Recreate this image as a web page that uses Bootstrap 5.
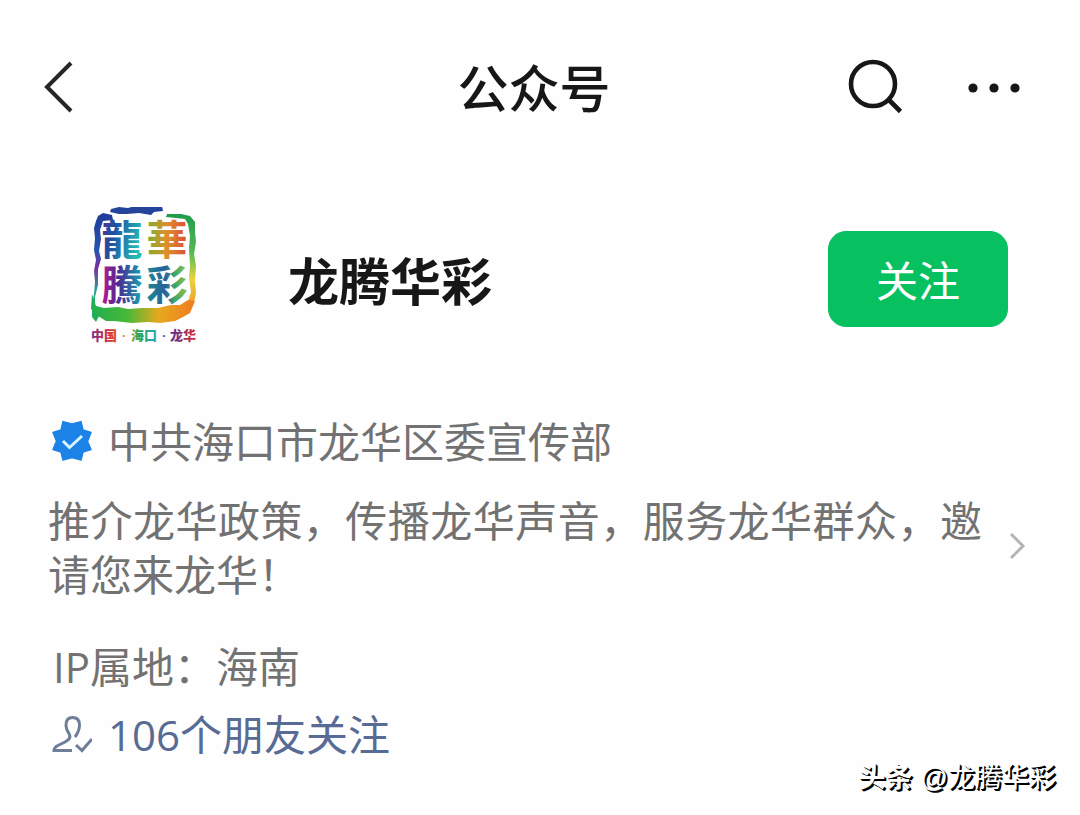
<!DOCTYPE html>
<html lang="zh-CN">
<head>
<meta charset="utf-8">
<meta name="viewport" content="width=device-width, initial-scale=1">
<title>公众号</title>
<link href="https://cdn.jsdelivr.net/npm/bootstrap@5.3.0/dist/css/bootstrap.min.css" rel="stylesheet">
<style>
  body { font-family: "Noto Sans CJK SC", sans-serif; background: #fefefe; color: #171717; font-size: 42px; line-height: 54px; }
  svg { display: block; flex: none; }
  .topbar { padding: 50px 54px 0 42px; }
  .topbar .side { flex: 1 1 0; }
  .topbar h1 { font-size: 51px; line-height: 72px; font-weight: 500; }
  .icon-btn { border: 0; padding: 0; background: none; color: #171717; }
  .profile { padding: 85px 72px 0 88px; }
  .profile h2 { font-size: 51px; line-height: 72px; font-weight: 700; margin-left: 88px; }
  .follow { --bs-btn-bg: #07c160; --bs-btn-border-color: #07c160; --bs-btn-color: #fff; --bs-btn-hover-bg: #06ad56; --bs-btn-hover-color: #fff; width: 180px; height: 96px; border-radius: 18px; font-size: 42px; line-height: 54px; padding: 0; }
  .details { padding: 62px 48px 0; color: #727272; }
  .intro { color: inherit; margin-top: 25px; }
  .intro span { text-align: justify; margin-right: 18px; }
  .friends { color: #576b95; margin-top: 14px; }
  .region { padding-left: 5px; margin-top: 40px; }
  .region, .friends { font-family: "Open Sans", "Noto Sans CJK SC", sans-serif; }
  .watermark { font-family: "Liberation Sans", "Noto Sans CJK SC", sans-serif; font-size: 27px; line-height: 32px; color: #fff; text-shadow: 1px 1px 0 #000, 2px 2px 0 #000; padding-right: 24px; gap: 8px; }
</style>
</head>
<body>
<header class="topbar d-flex align-items-center">
  <div class="side">
    <button class="icon-btn d-block" type="button" aria-label="返回">
      <svg width="40" height="56" viewBox="0 0 40 56" fill="none" stroke="#262626" stroke-width="4"><path d="M29 5 5 29 29 53"/></svg>
    </button>
  </div>
  <h1 class="m-0">公众号</h1>
  <div class="side d-flex justify-content-end align-items-center">
    <button class="icon-btn" type="button" aria-label="搜索">
      <svg width="60" height="60" viewBox="0 0 60 60" fill="none" stroke="#171717" stroke-width="4.600"><circle cx="27" cy="28" r="22"/><path d="m42.500 43.500 12 12"/></svg>
    </button>
    <button class="icon-btn ms-5" type="button" aria-label="更多">
      <svg width="72" height="60" viewBox="0 0 72 60" fill="#171717"><circle cx="19" cy="32" r="4.600"/><circle cx="40" cy="32" r="4.600"/><circle cx="61" cy="32" r="4.600"/></svg>
    </button>
  </div>
</header>
<main>
  <section class="profile d-flex align-items-center">
    <svg width="112" height="144" viewBox="0 3 112 144" role="img" aria-label="中国·海口·龙华" font-family="Noto Sans CJK SC, sans-serif">
      <defs>
        <linearGradient id="frameLeft" x1="0" y1="0" x2="0" y2="1"><stop offset="0" stop-color="#203a9a"/><stop offset=".35" stop-color="#2755b0"/><stop offset=".5" stop-color="#7b2f9c"/><stop offset=".7" stop-color="#2d9c9c"/><stop offset="1" stop-color="#22b24c"/></linearGradient>
        <linearGradient id="frameRight" x1="0" y1="0" x2="0" y2="1"><stop offset="0" stop-color="#1f9c4b"/><stop offset=".4" stop-color="#58ba58"/><stop offset=".65" stop-color="#ead33c"/><stop offset="1" stop-color="#f08a20"/></linearGradient>
        <linearGradient id="frameBase"><stop offset="0" stop-color="#1fae50"/><stop offset=".35" stop-color="#48b838"/><stop offset=".65" stop-color="#e7a91e"/><stop offset="1" stop-color="#ef7b22"/></linearGradient>
        <linearGradient id="inkA" x2="1" y2=".4"><stop offset="0" stop-color="#5a2a94"/><stop offset=".4" stop-color="#1e50a5"/><stop offset="1" stop-color="#27b9b4"/></linearGradient>
        <linearGradient id="inkB"><stop offset="0" stop-color="#7dae2e"/><stop offset=".5" stop-color="#df8f2c"/><stop offset="1" stop-color="#dc4c35"/></linearGradient>
        <linearGradient id="inkC"><stop offset="0" stop-color="#c0178f"/><stop offset=".4" stop-color="#4a2a94"/><stop offset="1" stop-color="#1aa3b0"/></linearGradient>
        <linearGradient id="inkD"><stop offset="0" stop-color="#178c94"/><stop offset=".45" stop-color="#2b5e9c"/><stop offset=".7" stop-color="#3fa86a"/><stop offset="1" stop-color="#9ac03c"/></linearGradient>
        <linearGradient id="caption" gradientUnits="userSpaceOnUse" x1="3" x2="109" y1="0" y2="0"><stop offset="0" stop-color="#7a2a90"/><stop offset=".18" stop-color="#d93030"/><stop offset=".32" stop-color="#e88a28"/><stop offset=".45" stop-color="#25a45a"/><stop offset=".6" stop-color="#2aa8b0"/><stop offset=".75" stop-color="#55308f"/><stop offset="1" stop-color="#e02f2f"/></linearGradient>
      </defs>
      <path fill="#24439b" d="m23 5 8-2 9 1 7-2 27 0 1 5-9 1-3 3-12-2-12 1-8 0-9-2z"/>
      <path fill="url(#frameLeft)" d="m10 12 5-3 9 2 1 5-10 1-3 9 1 9-2 12 2 8-3 10 0 16-3 12 0 11 5 6-4 8-4-5 0-11 2-12 1-12-1-11 2-11-2-10 1-12-1-10 2-7z"/>
      <path fill="url(#frameRight)" d="m79 10 14 0 9 2 5 6 0 10 1 10-2 12 2 12-1 15 1 12-2 10-8 11-5-4 7-8 3-10-2-14 1-13-1-17 1-12-2-12-3-5-19-2z"/>
      <path fill="url(#frameBase)" d="m4 90 4 12 8 2 14-1 10 2 14-1 16 0 13-3 9 0 8-5 7 1-5 12-7 4-8 4-15 2-12-1-16 1-18-2-8 0-8-5-7-7z"/>
      <g font-size="41" text-anchor="middle" font-weight="700">
        <text x="34" y="51" fill="url(#inkA)">龍</text><text x="79" y="51" fill="url(#inkB)">華</text>
        <text x="34" y="96" fill="url(#inkC)">騰</text><text x="79" y="96" fill="url(#inkD)">彩</text>
      </g>
      <g font-size="13" font-weight="900" fill="url(#caption)">
        <text x="3" y="136">中国</text><text x="43" y="136">海口</text><text x="82" y="136">龙华</text>
        <g font-family="Liberation Sans, sans-serif"><text x="34" y="136">·</text><text x="74" y="136">·</text></g>
      </g>
    </svg>
    <h2 class="mb-0">龙腾华彩</h2>
    <button class="btn follow ms-auto" type="button">关注</button>
  </section>
  <section class="details">
    <div class="d-flex align-items-center">
      <svg class="me-3" width="44" height="44" viewBox="0 0 44 44"><path fill="#1b82e6" stroke="#1b82e6" stroke-width="1.500" stroke-linejoin="round" d="M24 6 33 3.600 35 12 43 14.500 39.500 23.500 43 31.500 35 34 33 42 24 39.500 15 42 13 34 5 31.500 8.500 23 5 14.500 13 12 15 3.600z"/><path fill="none" stroke="#d8f4ff" stroke-width="3" d="m15 23 6.500 6.500L34 18"/></svg>
      <span>中共海口市龙华区委宣传部</span>
    </div>
    <a class="intro d-flex align-items-center text-decoration-none" href="#intro">
      <span class="flex-fill">推介龙华政策，传播龙华声音，服务龙华群众，邀请您来龙华！</span>
      <svg width="32" height="32" viewBox="0 0 32 32" fill="none" stroke="#b4b4b4" stroke-width="3"><path d="m11 4 12 12-12 12"/></svg>
    </a>
    <p class="region mb-0">IP属地：海南</p>
    <a class="friends d-flex align-items-center text-decoration-none" href="#friends">
      <svg class="me-3" width="44" height="44" viewBox="-2 0 44 44" fill="none" stroke="#6e7d99" stroke-width="3"><path d="M25 24C28 20 29.500 16 29.500 12C29.500 7 27 4.500 22.500 4.500S16 7 16 12C16 16 18 19 19.500 21.500C21 25 19 27 15 29L7 33Q4 35 4 37.500H22"/><path d="m26 32 6 5.500L42 26"/></svg>
      <span>106个朋友关注</span>
    </a>
  </section>
</main>
<footer class="watermark d-flex justify-content-end"><span class="fw-semibold">头条</span><span>@龙腾华彩</span></footer>
<script src="https://cdn.jsdelivr.net/npm/bootstrap@5.3.0/dist/js/bootstrap.bundle.min.js"></script>
</body>
</html>
